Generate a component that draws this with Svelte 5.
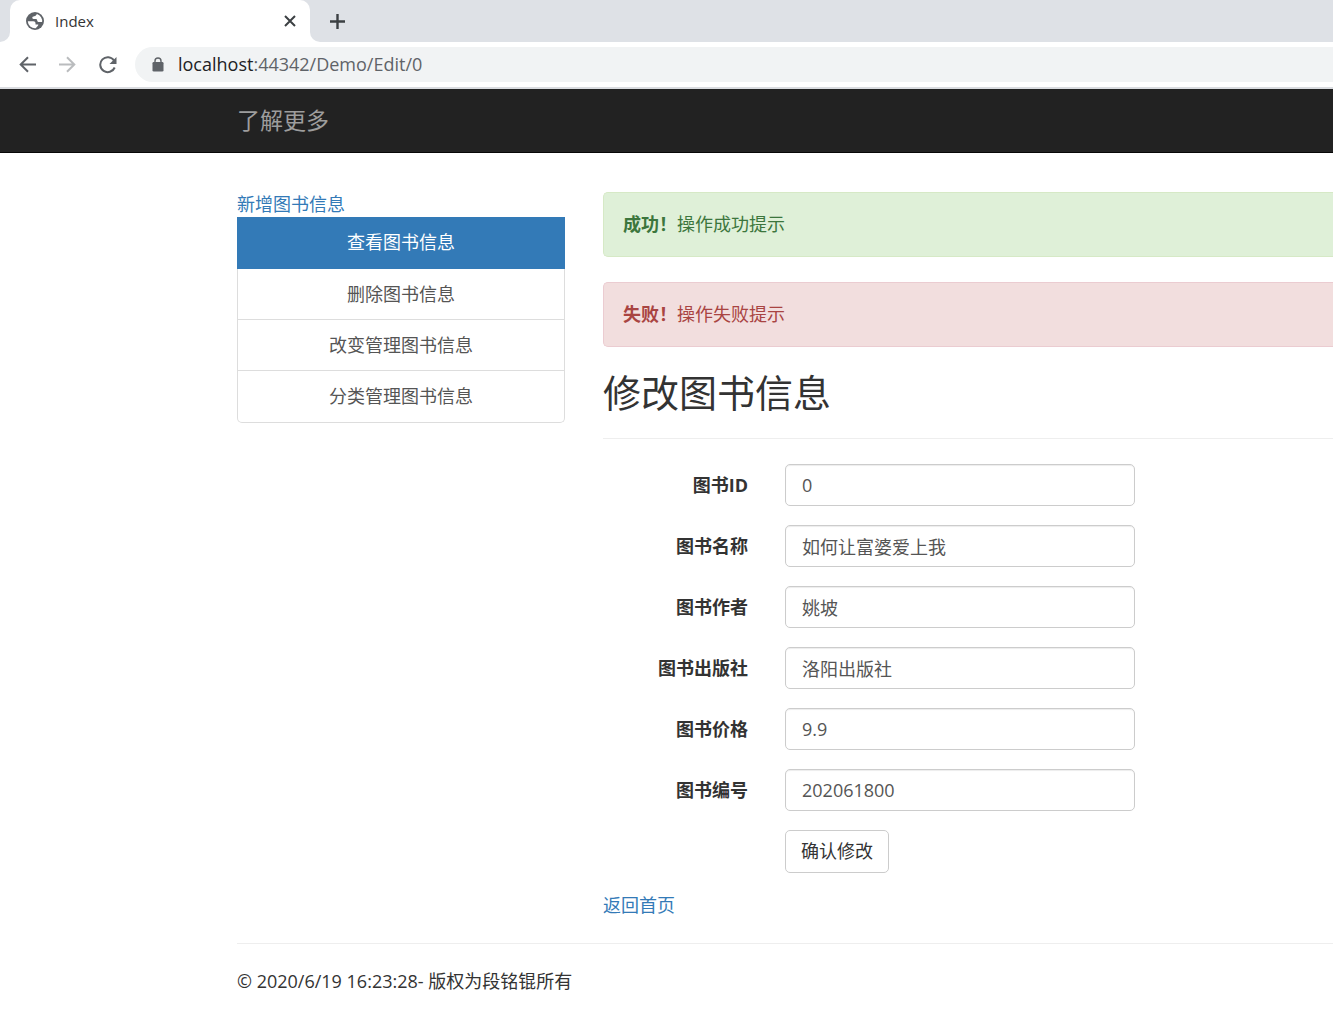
<script lang="ts">
  let menu = $state([
    { text: '查看图书信息', active: true },
    { text: '删除图书信息', active: false },
    { text: '改变管理图书信息', active: false },
    { text: '分类管理图书信息', active: false }
  ]);

  let fields = $state([
    { id: 'book-id', label: '图书ID', value: '0' },
    { id: 'book-name', label: '图书名称', value: '如何让富婆爱上我' },
    { id: 'book-author', label: '图书作者', value: '姚坡' },
    { id: 'book-press', label: '图书出版社', value: '洛阳出版社' },
    { id: 'book-price', label: '图书价格', value: '9.9' },
    { id: 'book-no', label: '图书编号', value: '202061800' }
  ]);
</script>

<div class="browser">
  <div class="tab-strip">
    <div class="tab-edge"></div>
    <div class="tab">
      <svg width="18" height="18" viewBox="0 0 18 18">
        <circle cx="9" cy="9" r="9" fill="#5f6368"/>
        <path d="M1.800 9.200h5.400c1.600 0 2.300.8 2.300 2v1.200h2.300c.7 0 .6.7.1 1.300l-2.200 2.500A7.200 7.200 0 0 1 1.800 9.200z" fill="#fff"/>
        <path d="M11 2.100 9.300 3.900c-.5.5-1.300.3-2 .5-.9.300-1.100 1-1 1.700.2.900 1 1 1.900 1h1.300c1 0 1.500.5 1.700 1.400.2 1 .9 1.600 1.900 1.600h3A7.200 7.200 0 0 0 11 2.100z" fill="#fff"/>
      </svg>
      <span class="tab-title">Index</span>
      <button class="icon-btn" title="关闭">
        <svg width="12" height="12" viewBox="0 0 12 12" stroke="#3c4043" stroke-width="2">
          <path d="M1 1l10 10M11 1L1 11"/>
        </svg>
      </button>
    </div>
    <div class="tab-rest">
      <button class="icon-btn" title="新标签页">
        <svg width="15" height="15" viewBox="0 0 15 15" stroke="#3c4043" stroke-width="2.400">
          <path d="M7.500 0v15M0 7.500h15"/>
        </svg>
      </button>
    </div>
  </div>

  <div class="toolbar">
    <button class="icon-btn" title="后退">
      <svg width="17" height="17" viewBox="0 0 17 17" fill="none" stroke="#5f6368" stroke-width="2">
        <path d="M17 8.500H2M9 1.200L1.700 8.500 9 15.800"/>
      </svg>
    </button>
    <button class="icon-btn" title="前进">
      <svg width="17" height="17" viewBox="0 0 17 17" fill="none" stroke="#babcbe" stroke-width="2">
        <path d="M0 8.500h15M8 1.200l7.300 7.300L8 15.800"/>
      </svg>
    </button>
    <button class="icon-btn" title="刷新">
      <svg width="18" height="18" viewBox="0 0 18 18" fill="none" stroke="#5f6368" stroke-width="2">
        <path d="M15 4.500A7.500 7.500 0 1 0 15.700 11.500"/>
        <path d="M17.500 1v7h-7z" fill="#5f6368" stroke="none"/>
      </svg>
    </button>
    <div class="address">
      <svg width="12" height="15" viewBox="0 0 12 15">
        <rect x="0.500" y="5" width="11" height="9.500" rx="1.300" fill="#5f6368"/>
        <path d="M3 6V4a3 3 0 0 1 6 0V6" fill="none" stroke="#5f6368" stroke-width="1.400"/>
      </svg>
      <span class="url"><span class="host">localhost</span>:44342/Demo/Edit/0</span>
    </div>
  </div>
</div>

<nav class="navbar">
  <a class="brand" href="#more">了解更多</a>
</nav>

<div class="container">
  <div class="row">
    <aside>
      <a class="link" href="#add">新增图书信息</a>
      <div class="list-group">
        {#each menu as item}
          <a class="list-item" class:active={item.active} href="#list">{item.text}</a>
        {/each}
      </div>
    </aside>

    <main>
      <div class="alert alert-success"><strong>成功！</strong>操作成功提示</div>
      <div class="alert alert-danger"><strong>失败！</strong>操作失败提示</div>

      <h2>修改图书信息</h2>
      <hr />

      <form onsubmit={(e) => e.preventDefault()}>
        {#each fields as field}
          <label for={field.id}>{field.label}</label>
          <input id={field.id} type="text" bind:value={field.value} />
        {/each}
        <button class="btn" type="submit">确认修改</button>
      </form>

      <a class="link" href="#home">返回首页</a>
    </main>
  </div>

  <hr />
  <footer>© 2020/6/19 16:23:28- 版权为段铭锟所有</footer>
</div>

<style>
  :global(body) {
    margin: 0;
    background: #fff;
  }
  .browser,
  .navbar,
  .container {
    font-family: 'Open Sans', 'Noto Sans CJK SC', sans-serif;
    font-size: 18px;
    line-height: 25px;
    color: #333;
  }
  a {
    text-decoration: none;
  }
  input,
  button {
    font: inherit;
    box-sizing: border-box;
  }
  .icon-btn {
    display: flex;
    padding: 0;
    border: 0;
    background: none;
  }

  /* browser chrome */
  .tab-strip {
    display: flex;
    height: 42px;
    background: #fff;
  }
  .tab-edge {
    width: 10px;
    background: #dee1e6;
    border-bottom-right-radius: 10px;
  }
  .tab {
    display: flex;
    align-items: center;
    box-sizing: border-box;
    width: 300px;
    padding: 0 14px 0 16px;
    background: linear-gradient(#dee1e6 10px, #fff 10px);
    position: relative;
    z-index: 0;
  }
  .tab::before {
    content: '';
    position: absolute;
    inset: 0;
    z-index: -1;
    background: #fff;
    border-radius: 10px 10px 0 0;
  }
  .tab-title {
    flex: 1;
    margin-left: 11px;
    font-size: 15px;
  }
  .tab-rest {
    flex: 1;
    display: flex;
    align-items: center;
    padding-left: 20px;
    background: #dee1e6;
    border-bottom-left-radius: 10px;
  }
  .toolbar {
    display: flex;
    align-items: center;
    gap: 23px;
    height: 45px;
    padding-left: 19px;
    border-bottom: 2px solid #dadce0;
  }
  .address {
    flex: 1;
    display: flex;
    align-items: center;
    gap: 14px;
    height: 35px;
    margin-left: -5px;
    padding-left: 17px;
    background: #f1f3f4;
    border-radius: 18px 0 0 18px;
  }
  .url {
    color: #5f6368;
  }
  .host {
    color: #202124;
  }

  /* page */
  .navbar {
    display: flex;
    align-items: center;
    height: 63px;
    padding-left: 237px;
    background: #222;
    border-bottom: 1px solid #080808;
  }
  .brand {
    font-size: 23px;
    color: #9d9d9d;
  }
  .container {
    padding: 39px 0 17px 237px;
  }
  .row {
    display: grid;
    grid-template-columns: 328px 1fr;
    gap: 38px;
  }
  .link {
    display: block;
    color: #337ab7;
  }
  .list-group {
    padding-bottom: 1px;
    border: 1px solid #ddd;
    border-top: 0;
    border-radius: 0 0 5px 5px;
  }
  .list-item {
    display: block;
    padding: 13px 0 12px;
    border-top: 1px solid #ddd;
    text-align: center;
    color: #555;
  }
  .list-item.active {
    margin: 0 -1px;
    padding: 12px 0 13px;
    border: 1px solid #337ab7;
    background: #337ab7;
    color: #fff;
  }
  .active + .list-item {
    border-top: 0;
  }
  .alert {
    margin-bottom: 25px;
    padding: 19px;
    border: 1px solid;
    border-right: 0;
    border-radius: 5px 0 0 5px;
  }
  .alert-success {
    color: #3c763d;
    background: #dff0d8;
    border-color: #d6e9c6;
  }
  .alert-danger {
    color: #a94442;
    background: #f2dede;
    border-color: #ebccd1;
  }
  h2 {
    margin: 0;
    font-size: 38px;
    font-weight: 400;
    line-height: 41px;
  }
  hr {
    margin: 25px 0;
    border: 0;
    border-top: 1px solid #eee;
  }
  form {
    display: grid;
    grid-template-columns: 145px 350px;
    gap: 19px 37px;
    align-items: center;
    margin-bottom: 20px;
  }
  label {
    text-align: right;
    font-weight: 700;
  }
  input {
    height: 42px;
    padding: 0 16px;
    border: 1px solid #ccc;
    border-radius: 5px;
    box-shadow: inset 0 1px 1px rgba(0, 0, 0, 0.075);
    color: #555;
  }
  .btn {
    grid-column: 2;
    justify-self: start;
    height: 43px;
    padding: 0 15px;
    border: 1px solid #ccc;
    border-radius: 5px;
    background: #fff;
    color: #333;
  }
</style>
